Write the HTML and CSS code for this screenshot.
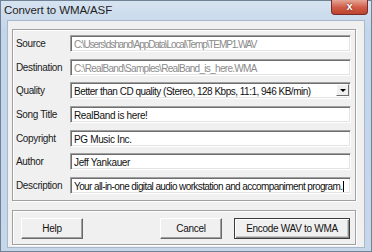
FILE: index.html
```html
<!DOCTYPE html>
<html lang="en">
<head>
    <meta charset="UTF-8">
    <title>Convert to WMA/ASF</title>
    <link rel="stylesheet" href="styles.css">
</head>
<body>

<div class="window">
    <div class="titlebar">
        <span class="title">Convert to WMA/ASF</span>
        <span class="close-btn">x</span>
    </div>

    <div class="client">
        <div class="group fields">
            <div class="row">
                <span class="label">Source</span>
                <div class="field disabled source">C:\Users\dshand\AppData\Local\Temp\TEMP1.WAV</div>
            </div>
            <div class="row">
                <span class="label">Destination</span>
                <div class="field disabled dest">C:\RealBand\Samples\RealBand_is_here.WMA</div>
            </div>
            <div class="row">
                <span class="label">Quality</span>
                <div class="field select">
                    <span class="select-text">Better than CD quality (Stereo, 128 Kbps, 11:1, 946 KB/min)</span>
                    <span class="drop-btn"></span>
                </div>
            </div>
            <div class="row">
                <span class="label">Song Title</span>
                <div class="field">RealBand is here!</div>
            </div>
            <div class="row">
                <span class="label">Copyright</span>
                <div class="field">PG Music Inc.</div>
            </div>
            <div class="row">
                <span class="label">Author</span>
                <div class="field">Jeff Yankauer</div>
            </div>
            <div class="row">
                <span class="label">Description</span>
                <div class="field desc">Your all-in-one digital audio workstation and accompaniment program.<span class="caret"></span></div>
            </div>
        </div>

        <div class="group buttons">
            <button class="btn">Help</button>
            <div class="right-buttons">
                <button class="btn">Cancel</button>
                <button class="btn default wide">Encode WAV to WMA</button>
            </div>
        </div>
    </div>
</div>

</body>
</html>
```

FILE: styles.css
```css
body {
    margin: 0;
    font-family: "Liberation Sans", Arial, sans-serif;
    font-size: 10px;
    color: #1a1a1a;
    background-color: #fff;
}
.window {
    width: 372px;
    height: 252px;
    box-sizing: border-box;
    display: flex;
    flex-direction: column;
    background: linear-gradient(#d6e3f1, #c3d5e9 30px, #c6d7ea);
    border: 1px solid #6f8296;
}
.titlebar {
    height: 19px;
    display: flex;
    align-items: flex-start;
    justify-content: space-between;
    padding-left: 3px;
    flex-shrink: 0;
}
.title {
    font-size: 11.5px;
    color: #1e1e1e;
    margin-top: 3px;
    letter-spacing: -0.1px;
}
.close-btn {
    width: 37px;
    height: 15px;
    margin-right: 3px;
    margin-top: -1px;
    box-sizing: border-box;
    border: 1px solid #7a2a2a;
    border-top: none;
    border-radius: 0 0 4px 4px;
    background: linear-gradient(#e6a595, #cf5a45 55%, #bd4430);
    color: #fff;
    font-weight: bold;
    font-size: 11px;
    text-align: center;
    line-height: 13px;
    text-shadow: 0 0 2px #5a1a10;
}
.client {
    flex: 1;
    margin: 0 6px 5px 6px;
    padding: 8px 8px 2px 4px;
    background-color: #f0f0f0;
    border: 1px solid #a8b8cc;
    display: flex;
    flex-direction: column;
    gap: 9px;
}
.group {
    border: 1px solid #a0a0a0;
    box-shadow: inset 1px 1px 0 #fff, 1px 1px 0 #fff;
}
.fields {
    padding: 5px 4px 6px 3px;
    display: flex;
    flex-direction: column;
    gap: 6.7px;
}
.row {
    display: flex;
    align-items: center;
    height: 17px;
}
.label {
    width: 54px;
    flex-shrink: 0;
    letter-spacing: -0.35px;
}
.field {
    flex: 1;
    height: 17px;
    box-sizing: border-box;
    background-color: #fff;
    border-top: 1px solid #a0a0a0;
    border-left: 1px solid #a0a0a0;
    border-right: 1px solid #fff;
    border-bottom: 1px solid #fff;
    box-shadow: inset 1px 1px 0 #6e6e6e, inset -1px -1px 0 #e3e3e3;
    padding: 2px 3px 0 3px;
    line-height: 13px;
    white-space: nowrap;
    overflow: hidden;
    color: #111;
    letter-spacing: -0.35px;
}
.field.disabled {
    color: #8a8a8a;
}
.field.source {
    letter-spacing: -1.1px;
}
.field.dest {
    letter-spacing: -0.7px;
}
.field.desc {
    letter-spacing: -0.6px;
}
.field.select {
    display: flex;
    justify-content: space-between;
    padding-right: 1px;
    letter-spacing: -0.5px;
}
.drop-btn {
    width: 13px;
    height: 12px;
    box-sizing: border-box;
    background-color: #f0f0f0;
    border-top: 1px solid #fff;
    border-left: 1px solid #fff;
    border-right: 1px solid #6e6e6e;
    border-bottom: 1px solid #6e6e6e;
    position: relative;
    margin-top: -1px;
}
.drop-btn::after {
    content: "";
    position: absolute;
    left: 3px;
    top: 4px;
    border-left: 3px solid transparent;
    border-right: 3px solid transparent;
    border-top: 3px solid #000;
}
.caret {
    display: inline-block;
    width: 1px;
    height: 11px;
    background-color: #000;
    vertical-align: -2px;
    margin-left: 1px;
}
.buttons {
    padding: 7px 5px 5px 8px;
    display: flex;
    justify-content: space-between;
}
.right-buttons {
    display: flex;
    gap: 12px;
}
.btn {
    width: 62px;
    height: 21px;
    margin: 0;
    padding: 0;
    font-family: "Liberation Sans", Arial, sans-serif;
    font-size: 10px;
    color: #111;
    background-color: #f0f0f0;
    border-top: 1px solid #fff;
    border-left: 1px solid #fff;
    border-right: 1px solid #696969;
    border-bottom: 1px solid #696969;
    box-shadow: inset -1px -1px 0 #a0a0a0;
    letter-spacing: -0.3px;
}
.btn.wide {
    width: 116px;
}
.btn.default {
    border: 1px solid #3c3c3c;
    box-shadow: inset 1px 1px 0 #fff, inset -1px -1px 0 #8a8a8a, inset -2px -2px 0 #c8c8c8;
}
```
